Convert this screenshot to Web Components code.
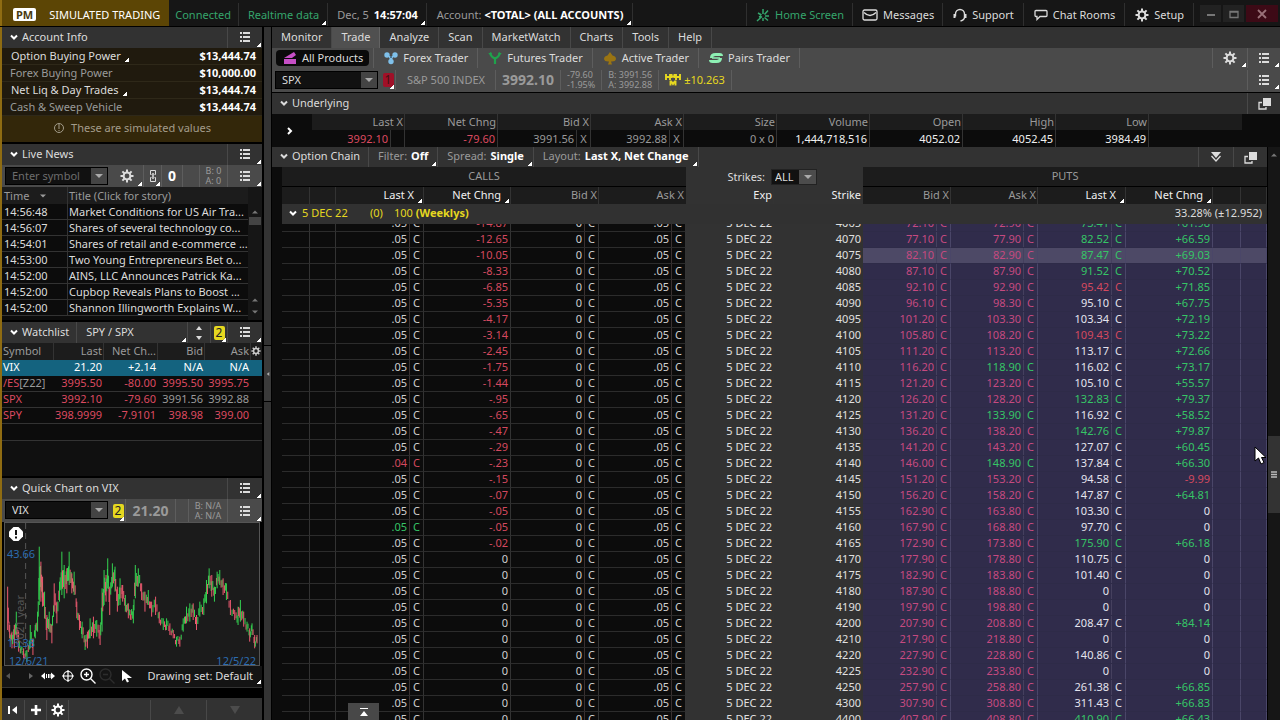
<!DOCTYPE html>
<html lang="en">
<head>
<meta charset="utf-8">
<title>Simulated Trading</title>
<style>
  :root {
    --bar: #323232; --tool: #4a4a4a; --head: #1c1c1c; --cell: #0c0c0c; --line: #333;
    --dim: #9a9a9a; --text: #dcdcdc; --red: #dc4a60; --green: #36c566; --yellow: #e6d820;
  }
  body { margin: 0; background: #000; color: var(--text); font: 11px/16px "Noto Sans", "Open Sans", sans-serif; }
</style>
</head>
<body>
<trade-desk></trade-desk>
<script>
const gear = (() => {
  let s = '';
  for (let i = 0; i < 8; i++) s += `<path d="M7 .5v3" transform="rotate(${i * 45} 7 7)"/>`;
  return `<g fill="none" stroke="currentColor" stroke-width="2">${s}<circle cx="7" cy="7" r="3.4"/></g>`;
})();
const ICONS = {
  gear: [14, 14, gear],
  list: [12, 12, '<path fill="currentColor" d="M1 1h2v2H1zM4 1h7v2H4zM1 5h2v2H1zM4 5h7v2H4zM1 9h2v2H1zM4 9h7v2H4z"/>'],
  chevron: [8, 8, '<path d="M1 2.500l3 3 3-3" fill="none" stroke="currentColor" stroke-width="2"/>'],
  right: [8, 8, '<path d="M2 1l3 3-3 3" fill="none" stroke="currentColor" stroke-width="2"/>'],
  down: [8, 8, '<path d="M0 2h8L4 6z" fill="currentColor"/>'],
  up: [8, 8, '<path d="M0 6h8L4 2z" fill="currentColor"/>'],
  spin: [8, 14, '<path d="M1 4h6L4 0zM1 10h6L4 14z" fill="currentColor"/>'],
  link: [8, 14, '<g fill="none" stroke="currentColor"><path d="M2.500 5.500h-1v-4h5v4h-1M2.500 8.500h-1v4h5v-4h-1"/><path d="M4 4v6" stroke-width="1.500"/></g>'],
  info: [12, 12, '<circle cx="6" cy="6" r="4.500" fill="none" stroke="currentColor"/><path d="M5.500 2h1v5h-1zM5.500 8h1v1h-1z" fill="currentColor"/>'],
  home: [14, 14, '<g fill="none" stroke="currentColor" stroke-width="1.500"><path d="M1 13l5-4.500M7 1v5M12 2.500L8.500 6.500M13 8H9M12 12.500L8.500 9.500M7 10v3M2 5l3.500 2M3 9l2-1"/></g>'],
  mail: [16, 12, '<g fill="none" stroke="currentColor" stroke-width="1.300"><rect x="1" y="1" width="14" height="10" rx="1.500"/><path d="M2 3.500q6 6 12 0"/></g>'],
  support: [14, 14, '<g fill="none" stroke="currentColor" stroke-width="1.400"><path d="M2.500 8.500V6a4.500 4.500 0 0 1 9 0v3q0 3-4 4"/><path d="M1.500 6v4M12.500 6v4" stroke-width="2"/></g>'],
  chat: [14, 12, '<path d="M2 1.500h10a1 1 0 0 1 1 1v4a1 1 0 0 1-1 1H6l-3 3v-3H2a1 1 0 0 1-1-1v-4a1 1 0 0 1 1-1z" fill="none" stroke="currentColor" stroke-width="1.300"/>'],
  min: [10, 10, '<path d="M1 5h8v2H1z" fill="currentColor"/>'],
  max: [10, 10, '<path d="M1 2.500h8v6H1zM1 3h8" fill="none" stroke="currentColor" stroke-width="1.300"/>'],
  close: [10, 10, '<path d="M1 1l8 8M9 1L1 9" stroke="currentColor" stroke-width="1.800"/>'],
  all: [14, 14, '<path d="M1 8h12v5H1z" fill="#c64fc6"/><path d="M1 7l10-6 2 3-4 3z" fill="#c64fc6"/>'],
  forex: [14, 14, '<g fill="#7fc0ea"><circle cx="3" cy="4" r="2.700"/><circle cx="11" cy="4" r="2.700"/><circle cx="7" cy="10.500" r="2.700"/><path d="M4 5l6 0-3 5z"/></g><circle cx="7" cy="6" r="1" fill="#3a5a70"/>'],
  futures: [14, 14, '<path d="M2 2q1 4 5 5.500Q11 6 12 2M7 7v6" fill="none" stroke="#1fa34c" stroke-width="2.200"/><path d="M0 3l3-2 1 2zM14 3l-3-2-1 2z" fill="#1fa34c"/>'],
  active: [14, 14, '<path d="M7 1l2.500 3.500Q13 5 13 8q-.500 2.500-4 2.500H8l1 3H5l1-3H5Q1.500 10.500 1 8q0-3 3.500-3.500z" fill="#9a7412"/>'],
  pairs: [14, 14, '<g fill="none" stroke="#8df0b4" stroke-width="3"><path d="M2.500 7q0-3.500 4-3.500h4q2 0 2 1.500M11.500 7q0 3.500-4 3.500h-4q-2 0-2-1.500"/><path d="M3 7h3l2 0h3" stroke-width="1.500"/></g>'],
  mm: [16, 14, '<path d="M1 1v6M5 1v6M1 4h4M6.500 1v4M9.500 1v4M6 3.500h4M11 1v6M15 1v6M11 4h4M5.500 7.500v5M10.500 7.500v5M6 8l2 3 2-3" fill="none" stroke="#e6d820" stroke-width="1.900"/>'],
  popout: [13, 13, '<path d="M5 1h8v8H5z" fill="currentColor"/><path d="M4 5.500H1v6.500h7v-2" fill="none" stroke="currentColor" stroke-width="1.300"/>'],
  dbl: [12, 12, '<path d="M1 1h10L6 7z" fill="currentColor"/><path d="M1.500 5L6 10l4.500-5" fill="none" stroke="currentColor" stroke-width="1.300"/>'],
  top: [10, 10, '<path d="M1 1h8v1H1zM1 9h8L5 4z" fill="currentColor"/>'],
  first: [10, 10, '<path d="M0 1h2v8H0zM9 1v8L4 5z" fill="currentColor"/>'],
  plus: [12, 12, '<path d="M6 1v10M1 6h10" stroke="currentColor" stroke-width="2.600"/>'],
  pan: [14, 10, '<path d="M0 5l4-3.500v7zM14 5l-4-3.500v7zM5 3h1v4H5zM7 3h1v4H7zM8.500 3h1v4h-1z" fill="currentColor"/>'],
  target: [14, 14, '<g fill="none" stroke="currentColor" stroke-width="1.200"><circle cx="7" cy="7" r="4.500"/><path d="M7 1v12M1 7h12"/></g>'],
  zin: [16, 16, '<g fill="none" stroke="currentColor" stroke-width="1.400"><circle cx="6.500" cy="6.500" r="5.500"/><path d="M10.500 10.500l5 5M4 6.500h5M6.500 4v5"/></g>'],
  zout: [16, 16, '<g fill="none" stroke="currentColor" stroke-width="1.400"><circle cx="6.500" cy="6.500" r="5.500"/><path d="M10.500 10.500l5 5M4 6.500h5"/></g>'],
  arrow: [12, 14, '<path d="M1 1v11l3-2.500 2 4 2-1-2-3.500h5z" fill="currentColor"/>'],
  left: [6, 8, '<path d="M5 1v6L1 4z" fill="currentColor"/>'],
  play: [6, 8, '<path d="M1 1v6l4-3z" fill="currentColor"/>'],
  bigup: [12, 12, '<path d="M1 10h10L6 2z" fill="currentColor"/>'],
  bigdown: [12, 12, '<path d="M1 2h10L6 10z" fill="currentColor"/>'],
  grip: [6, 8, '<path d="M0 1h6M0 3.500h6M0 6h6" stroke="currentColor" stroke-width="1.300"/>'],
  alert: [14, 14, '<path d="M4.500 0h5L14 4.500v5L9.500 14h-5L0 9.500v-5z" fill="#fff"/><path d="M6 3h2v5H6zM6 9.500h2v2H6z" fill="#111"/>'],
  mouse: [14, 20, '<path d="M1 1v14l3.500-3 2.500 6 3-1.500-2.500-5h4.500z" fill="#fff" stroke="#000"/>']
};
const ic = (name) => {
  const [w, h, body] = ICONS[name];
  return `<svg width="${w}" height="${h}" viewBox="0 0 ${w} ${h}" aria-hidden="true">${body}</svg>`;
};

const BASE = `
  :host { display: block; box-sizing: border-box; }
  *, *::before, *::after { box-sizing: border-box; }
  button, input, select { font: inherit; color: inherit; margin: 0; padding: 0; border: 0; background: none; border-radius: 0; outline: 0; text-align: left; }
  svg { display: block; flex: none; }
  .row { display: flex; align-items: stretch; }
  .grow { flex: 1; }
  .seg { display: flex; align-items: center; gap: 5px; padding: 0 9px 0 10px; border-right: 1px solid #ffffff1c; white-space: nowrap; position: relative; }
  .box { display: flex; align-items: center; justify-content: center; position: relative; border-right: 1px solid #ffffff1c; }
  .end { width: var(--end, 35px); border-right: 0; border-left: 1px solid #ffffff1c; }
  .c::after { content: ""; position: absolute; right: 1px; bottom: 1px; width: 4px; height: 4px; background: linear-gradient(135deg, transparent 50%, #fff 50%); }
  b { font-weight: 700; color: #fff; }
  .badge { width: 11px; height: 14px; border-radius: 2px; background: var(--yellow); color: #222; text-align: center; line-height: 14px; font-size: 12px; }
  .ba { font-size: 9px; line-height: 10px; color: var(--dim); }
  .big { font-size: 14px; font-weight: 700; color: var(--dim); }
  table { border-collapse: separate; border-spacing: 0; table-layout: fixed; width: 100%; }
  th { font-weight: 400; }
  th, td { padding: 0; overflow: hidden; white-space: nowrap; }
  .red { color: var(--red); } .green { color: var(--green); }
`;
function define(name, css, html, ready) {
  const tpl = document.createElement('template');
  tpl.innerHTML = `<style>${BASE}${css}</style>${html}`;
  customElements.define(name, class extends HTMLElement {
    connectedCallback() {
      if (this.shadowRoot) return;
      this.attachShadow({ mode: 'open' }).append(tpl.content.cloneNode(true));
      if (ready) ready.call(this, this.shadowRoot);
    }
  });
}

define('symbol-box', `
  :host { width: 103px; height: 18px; background: #111; border: 1px solid #000; }
  .row { height: 16px; }
  input { flex: 1; min-width: 0; padding-left: 6px; }
  input::placeholder { color: #6d6d6d; opacity: 1; }
  button { width: 16px; background: #444; display: grid; place-items: center; color: #aaa; }
`, `<div class="row"><input aria-label="Symbol"><button aria-label="Recent symbols">${ic('down')}</button></div>`,
function (root) {
  const input = root.querySelector('input');
  input.value = this.getAttribute('value') || '';
  input.placeholder = this.getAttribute('placeholder') || '';
});

define('panel-header', `
  :host { height: 21px; background: var(--bar); }
  .row { height: 100%; }
  .title { display: flex; align-items: center; gap: 4px; padding: 0 0 1px 8px; white-space: nowrap; }
  .title svg { color: #fff; }
  .end { padding-bottom: 1px; }
  ::slotted(*) { flex: 1; }
`, `<div class="row"><button class="title">${ic('chevron')}<span></span></button><slot><span class="grow"></span></slot><button class="box end c" aria-label="Menu">${ic('list')}</button></div>`,
function (root) { root.querySelector('.title span').textContent = this.getAttribute('label'); });

define('top-bar', `
  :host { background: #161616; border-bottom: 1px solid #000; height: 27px; }
  .row { height: 100%; padding-top: 3px; padding-left: 2px; background: linear-gradient(90deg, #8f6c12 2px, #161616 2px); }
  .sim { background: #5c4505; margin-top: -3px; padding: 3px 9px 0 11px; gap: 13px; border: 0; color: #fff; }
  .pm { background: #fff; color: #4a3a10; font-weight: 700; line-height: 13px; border-radius: 2px; padding: 0 3px; }
  .link { color: #35a56c; }
  .status { padding-left: 6px; padding-right: 7px; }
  .tight { padding: 0 8px 0 9px; }
  .muted { color: var(--dim); }
  .wins { display: flex; align-items: center; gap: 2px; padding: 0 2px 2px 6px; }
  .wins button { width: 21px; height: 17px; display: grid; place-items: center; background: #222; color: #777; }
  .wins .x { width: 32px; background: #3d0a16; color: #9a7078; }
`, `<div class="row">
  <div class="seg sim"><span class="pm">PM</span><span>SIMULATED TRADING</span></div>
  <div class="seg status link">Connected</div>
  <button class="seg tight c link">Realtime data</button>
  <button class="seg tight c"><span class="muted">Dec, 5</span><b>14:57:04</b></button>
  <button class="seg c"><span><span class="muted">Account:</span> <b>&lt;TOTAL&gt; (ALL ACCOUNTS)</b></span></button>
  <span class="grow"></span>
  <button class="seg tight link" style="border-left:1px solid #ffffff1c">${ic('home')}Home Screen</button>
  <button class="seg tight">${ic('mail')}Messages</button>
  <button class="seg">${ic('support')}Support</button>
  <button class="seg">${ic('chat')}Chat Rooms</button>
  <button class="seg">${ic('gear')}Setup</button>
  <div class="wins"><button aria-label="Minimize">${ic('min')}</button><button aria-label="Maximize">${ic('max')}</button><button class="x" aria-label="Close">${ic('close')}</button></div>
</div>`);

define('account-info', `
  :host { border-bottom: 2px solid #000; }
  dl { margin: 0; background: #201a0e; }
  dl div { display: flex; justify-content: space-between; height: 17px; padding: 0 6px 0 9px; border-bottom: 1px solid #2e2819; }
  dt { position: relative; padding-right: 9px; } dd { margin: 0; }
  dl .m { padding-left: 8px; } .m dt { color: var(--dim); }
  dt.c::after { bottom: 2px; }
  .note { height: 26px; padding-bottom: 2px; background: #33270a; color: #a39c8a; display: flex; align-items: center; justify-content: center; gap: 6px; margin: 0; }
`, `<panel-header label="Account Info"></panel-header>
<dl><div><dt class="c">Option Buying Power</dt><dd><b>$13,444.74</b></dd></div>
<div class="m"><dt>Forex Buying Power</dt><dd><b>$10,000.00</b></dd></div>
<div><dt class="c">Net Liq &amp; Day Trades</dt><dd><b>$13,444.74</b></dd></div>
<div class="m"><dt>Cash &amp; Sweep Vehicle</dt><dd><b>$13,444.74</b></dd></div></dl>
<p class="note">${ic('info')}These are simulated values</p>`);

define('live-news', `
  :host { border-bottom: 2px solid #000; }
  .tools { height: 22px; background: var(--tool); }
  symbol-box { margin: 2px 3px 0 3px; }
  .list { background: var(--cell); height: 133px; display: flex; align-items: flex-start; overflow: hidden; }
  thead th { height: 17px; background: var(--head); color: var(--dim); text-align: left; padding-left: 2px; border-right: 1px solid var(--line); }
  td { height: 16px; line-height: 15px; padding-left: 2px; border-bottom: 1px solid var(--line); border-right: 1px solid var(--line); }
  th svg { display: inline-block; margin-left: 8px; width: 6px; }
  td:last-child, th:last-child { border-right: 0; padding-left: 1px; }
  .bar { width: 14px; height: 133px; flex: none; background: #161616; display: flex; flex-direction: column; align-items: center; color: #777; padding-top: 21px; }
  .bar i { width: 12px; height: 8px; margin-top: 1px; background: #444; } .bar svg { width: 6px; }
`, `<panel-header label="Live News"></panel-header>
<div class="row tools"><symbol-box placeholder="Enter symbol"></symbol-box>
<button class="box c" style="width:33px" aria-label="News settings">${ic('gear')}</button>
<button class="box c" style="width:18px" aria-label="Link">${ic('link')}</button>
<span class="box" style="width:21px"><b style="font-size:14px">0</b></span><span class="box" style="width:17px"></span>
<span class="box ba grow" style="border:0">B: 0<br>A: 0</span><button class="box end c" aria-label="Menu">${ic('list')}</button></div>
<div class="list"><table><colgroup><col style="width:66px"><col></colgroup><thead><tr><th>Time ${ic('down')}</th><th>Title (Click for story)</th></tr></thead><tbody></tbody></table>
<div class="bar">${ic('up')}<i></i><span class="grow"></span>${ic('up')}<span style="height:4px"></span>${ic('down')}<span style="height:4px"></span></div></div>`,
function (root) {
  root.querySelector('tbody').innerHTML = [
    ['14:56:48', 'Market Conditions for US Air Tra...'], ['14:56:07', 'Shares of several technology co...'],
    ['14:54:01', 'Shares of retail and e-commerce ...'], ['14:53:00', 'Two Young Entrepreneurs Bet o...'],
    ['14:52:00', 'AINS, LLC Announces Patrick Ka...'], ['14:52:00', 'Cupbop Reveals Plans to Boost ...'],
    ['14:52:00', 'Shannon Illingworth Explains W...']
  ].map(r => `<tr><td>${r[0]}</td><td>${r[1]}</td></tr>`).join('');
});

define('watch-list', `
  :host { border-bottom: 2px solid #000; background: #101010; min-height: 156px; }
  .extra { display: flex; border-left: 1px solid #ffffff1c; margin-left: 7px; }
  .name { flex: 1; padding-left: 9px; padding-bottom: 1px; }
  th { height: 17px; line-height: 15px; vertical-align: top; background: var(--head); color: var(--dim); text-align: right; padding-right: 1px; border-right: 1px solid var(--line); }
  td { height: 16px; line-height: 13px; vertical-align: top; text-align: right; padding-right: 2px; border-bottom: 1px solid var(--line); background: var(--cell); }
  th:first-child, td:first-child { text-align: left; padding: 0 0 0 1px; }
  th:last-child { border: 0; color: #ccc; } th svg { width: 10px; height: 10px; margin-top: 3px; }
  .on td { background: #14637f; color: #fff; border-color: #14637f; }
  .g { color: var(--dim); }
  .empty td { height: 17px; }
`, `<panel-header label="Watchlist"><div class="extra"><button class="seg c name">SPY / SPX</button><button class="box" style="width:23px" aria-label="Next list">${ic('spin')}</button><button class="box c" style="width:16px;border:0"><span class="badge">2</span></button></div></panel-header>
<table><colgroup><col style="width:52px"><col style="width:50px"><col style="width:54px"><col style="width:47px"><col style="width:46px"><col></colgroup>
<thead><tr><th>Symbol</th><th>Last</th><th>Net Ch...</th><th>Bid</th><th>Ask</th><th>${ic('gear')}</th></tr></thead>
<tbody><tr class="on"><td>VIX</td><td>21.20</td><td>+2.14</td><td>N/A</td><td>N/A</td><td></td></tr>
<tr class="red"><td>/ES<span class="g">[Z22]</span></td><td>3995.50</td><td>-80.00</td><td>3995.50</td><td>3995.75</td><td></td></tr>
<tr class="red"><td>SPX</td><td>3992.10</td><td>-79.60</td><td class="g">3991.56</td><td class="g">3992.88</td><td></td></tr>
<tr class="red"><td>SPY</td><td>398.9999</td><td>-7.9101</td><td>398.98</td><td>399.00</td><td></td></tr>
<tr class="empty"><td colspan="6"></td></tr></tbody></table>`);

const ENVELOPE = [22,215,345,28,330,370,35,350,400,42,330,400,48,290,360,55,350,410,62,395,415,70,400,430,80,405,440,90,330,400,98,370,420,105,330,370,112,290,350,117,95,270,122,140,260,127,185,275,133,230,310,140,300,375,147,290,350,155,330,385,162,205,290,170,260,325,178,200,260,185,110,240,192,150,250,200,160,235,207,110,210,215,175,235,222,170,240,230,260,310,238,300,345,246,320,370,255,360,405,262,350,400,270,310,370,280,305,370,290,315,365,300,330,390,306,220,350,312,165,270,318,180,260,323,130,220,329,215,300,337,145,215,345,155,230,352,215,290,360,190,270,368,210,260,376,240,290,385,265,310,393,285,315,400,270,325,406,150,250,415,160,215,425,205,255,435,230,290,445,225,270,455,260,305,467,245,300,478,290,325,490,310,345,500,310,345,510,325,360,520,345,370,530,365,395,540,365,395,550,310,350,560,275,325,570,265,320,580,265,315,590,300,345,600,260,305,612,250,300,620,195,265,628,160,220,636,180,245,644,215,260,652,170,220,660,165,210,670,190,240,680,205,255,692,255,300,705,285,315,715,275,330,722,255,320,732,290,335,742,320,350,750,340,380,757,325,360,765,360,400,772,360,385];
function priceBars() {
  const pts = [];
  for (let i = 0; i < ENVELOPE.length; i += 3) pts.push(ENVELOPE.slice(i, i + 3));
  const out = []; let prev = 300;
  const bar = (x, a, b, k) => {
    const mid = (a + b) / 2;
    const up = mid < prev ? k % 5 !== 0 : k % 4 === 0;
    prev = mid;
    out.push(`<path d="M${x} ${a}V${b}" stroke="${up ? '#34d350' : '#ee5a70'}"/>`);
  };
  pts.forEach((p, i) => {
    bar(p[0], p[1], p[2], i * 3);
    const n = pts[i + 1]; if (!n) return;
    for (const t of [.35, .7]) {
      const a = p[1] + (n[1] - p[1]) * t, b = p[2] + (n[2] - p[2]) * t, q = (b - a) * .27;
      const j = ((i * 7 + (t < .5 ? 3 : 8)) % 11 - 5) * 2;
      bar(Math.round(p[0] + (n[0] - p[0]) * t), Math.round(a + q + j), Math.round(b - q + j), i * 3 + (t < .5 ? 1 : 2));
    }
  });
  return out.join('');
}
define('quick-chart', `
  .tools { height: 23px; background: var(--tool); }
  symbol-box { margin: 2px 3px 0 3px; }
  .plot { position: relative; height: 144px; margin: 0 2px; background: #1b1b1b; border: 1px solid #555; color: #2c6cb0; }
  .plot > svg { width: 100%; height: 100%; }
  .plot span { position: absolute; line-height: 14px; }
  .draw { height: 22px; padding-bottom: 2px; background: #141414; border-bottom: 1px solid #333; align-items: center; color: #fff; }
  .draw button { display: grid; place-items: center; height: 19px; }
  .draw .set { position: relative; padding-right: 9px; color: var(--text); align-items: center; }
`, `<panel-header label="Quick Chart on VIX"></panel-header>
<div class="row tools"><symbol-box value="VIX"></symbol-box>
<button class="box c" style="width:15px"><span class="badge">2</span></button>
<span class="box big" style="width:50px">21.20</span><span class="box" style="width:13px"></span>
<span class="box ba grow" style="border:0">B: N/A<br>A: N/A</span><button class="box end c" aria-label="Menu">${ic('list')}</button></div>
<div class="plot"><svg viewBox="14 24 764 426" preserveAspectRatio="none"><path d="M76 24V450" stroke="#555" stroke-width="3" stroke-dasharray="18 12"/><g fill="none" stroke-width="3">${priceBars()}</g></svg>
<span style="left:4px;top:4px">${ic('alert')}</span>
<span style="left:2px;top:24px">43.66</span><span style="left:2px;top:113px">15.38</span>
<span style="left:4px;top:131px">12/6/21</span><span style="right:3px;top:131px">12/5/22</span>
<span style="left:8px;top:72px;color:#555;writing-mode:vertical-rl;transform:rotate(180deg)">2021 year</span></div>
<div class="row draw"><button style="width:12px;color:#555" aria-label="Back">${ic('left')}</button><button style="width:34px;color:#666" aria-label="Forward">${ic('play')}</button>
<button style="width:18px;margin-left:-9px" aria-label="Pan">${ic('pan')}</button><button style="width:21px" aria-label="Crosshair">${ic('target')}</button><button style="width:19px" aria-label="Zoom in">${ic('zin')}</button><button style="width:20px;color:#2c2c2c" aria-label="Zoom out">${ic('zout')}</button><button style="width:20px" aria-label="Pointer">${ic('arrow')}</button>
<span class="grow"></span><button class="set c">Drawing set: Default</button></div>`);

define('gadget-bar', `
  :host { background: var(--bar); height: 22px; margin-top: auto; }
  .row { height: 100%; color: #fff; padding-top: 2px; }
`, `<div class="row"><button class="box" style="width:23px" aria-label="First">${ic('first')}</button><button class="box" style="width:22px" aria-label="Add gadget">${ic('plus')}</button><button class="box" style="width:22px" aria-label="Settings">${ic('gear')}</button><span class="box grow"></span><button class="box" style="width:56px;color:#4c4c4c" aria-label="Up">${ic('bigup')}</button><button class="box" style="width:55px;color:#4c4c4c;border:0" aria-label="Down">${ic('bigdown')}</button></div>`);

define('main-menu', `
  nav { display: flex; height: 21px; background: var(--bar); }
  a { color: inherit; text-decoration: none; }
  .seg { padding: 0 9px 1px; }
  .on { background: #505050; }
`, `<nav><a class="seg" href="#monitor">Monitor</a><a class="seg on" href="#trade">Trade</a><a class="seg" href="#analyze">Analyze</a><a class="seg" href="#scan">Scan</a><a class="seg" href="#marketwatch">MarketWatch</a><a class="seg" href="#charts">Charts</a><a class="seg" href="#tools">Tools</a><a class="seg" href="#help">Help</a></nav>`);

define('product-tabs', `
  .row { height: 22px; background: var(--tool); padding-bottom: 2px; }
  a { color: inherit; text-decoration: none; }
  .first { padding: 0 4px 0 4px; }
  .pill { display: flex; gap: 5px; align-items: center; height: 16px; padding: 0 6px 0 7px; background: #0a0a0a; border-radius: 4px; }
`, `<nav class="row"><a class="seg first" href="#all"><span class="pill">${ic('all')}All Products</span></a><a class="seg" href="#forex">${ic('forex')}Forex Trader</a><a class="seg" href="#futures">${ic('futures')}Futures Trader</a><a class="seg" href="#active">${ic('active')}Active Trader</a><a class="seg" href="#pairs">${ic('pairs')}Pairs Trader</a><span class="grow"></span><button class="box c" style="width:35px;border:0;border-left:1px solid #ffffff1c" aria-label="Settings">${ic('gear')}</button><button class="box end c" aria-label="Menu">${ic('list')}</button></nav>`);

define('symbol-bar', `
  .row { height: 23px; background: var(--tool); border-bottom: 1px solid #000; padding-bottom: 2px; }
  symbol-box { margin: 1px 3px 0 3px; }
  .badge { background: #a01028; color: #401010; }
  .desc { color: var(--dim); padding: 0 10px 0 11px; } .em { color: var(--yellow); gap: 3px; }
  .tight { padding: 0 6px; }
`, `<div class="row"><symbol-box value="SPX"></symbol-box><button class="box c" style="width:15px"><span class="badge">1</span></button>
<span class="seg desc">S&amp;P 500 INDEX</span><span class="seg big tight">3992.10</span><span class="seg ba tight">-79.60<br>-1.95%</span><span class="seg ba tight">B: 3991.56<br>A: 3992.88</span><span class="seg em tight">${ic('mm')}±10.263</span>
<span class="grow"></span><button class="box end c" aria-label="Menu">${ic('list')}</button></div>`);

define('underlying-quote', `
  .head { height: 21px; background: var(--bar); }
  .title { display: flex; align-items: center; gap: 4px; padding: 0 0 1px 8px; }
  .body { background: var(--cell); }
  .open { width: 40px; padding-right: 4px; display: grid; place-items: center; color: #fff; }
  .pad { width: 38px; }
  th { height: 16px; line-height: 16px; background: var(--head); color: var(--dim); text-align: right; padding-right: 1px; border-right: 1px solid var(--line); }
  td { height: 17px; line-height: 17px; text-align: right; padding-right: 2px; border-right: 1px solid var(--line); color: #f0f0f0; }
  th:last-child, td:last-child { border: 0; }
  td i { display: inline-block; width: 14px; margin: 0 -2px 0 2px; border-left: 1px solid var(--line); font-style: normal; text-align: center; height: 17px; vertical-align: top; }
  .red { color: var(--red); } .g { color: var(--dim); }
`, `<div class="row head"><button class="title">${ic('chevron')}Underlying</button><span class="grow"></span><button class="box end" aria-label="Detach">${ic('popout')}</button></div>
<div class="row body"><button class="open" aria-label="Expand">${ic('right')}</button>
<table class="grow"><thead><tr><th>Last X</th><th>Net Chng</th><th>Bid X</th><th>Ask X</th><th>Size</th><th>Volume</th><th>Open</th><th>High</th><th>Low</th><th></th></tr></thead>
<tbody><tr><td class="red">3992.10<i></i></td><td class="red">-79.60</td><td class="g">3991.56<i>X</i></td><td class="g">3992.88<i>X</i></td><td class="g">0 x 0</td><td>1,444,718,516</td><td>4052.02</td><td>4052.45</td><td>3984.49</td><td></td></tr></tbody></table><span class="pad"></span></div>`);

const CHAIN = `4065|-14.87|72.10|72.90|73.41g|+61.98
4070|-12.65|77.10|77.90|82.52g|+66.59
4075|-10.05|82.10|82.90|87.47g|+69.03
4080|-8.33|87.10|87.90|91.52g|+70.52
4085|-6.85|92.10|92.90|95.42r|+71.85
4090|-5.35|96.10|98.30|95.10|+67.75
4095|-4.17|101.20|103.30|103.34|+72.19
4100|-3.14|105.80|108.20|109.43r|+73.22
4105|-2.45|111.20|113.20|113.17|+72.66
4110|-1.75|116.20|118.90g|116.02|+73.17
4115|-1.44|121.20|123.20|105.10|+55.57
4120|-.95|126.20|128.20|132.83g|+79.37
4125|-.65|131.20|133.90g|116.92|+58.52
4130|-.47|136.20|138.20|142.76g|+79.87
4135|-.29|141.20|143.20|127.07|+60.45
4140|-.23|146.00|148.90g|137.84|+66.30
4145|-.15|151.20|153.20|94.58|-9.99
4150|-.07|156.20|158.20|147.87|+64.81
4155|-.05|162.90|163.80|103.30|0
4160|-.05|167.90|168.80|97.70|0
4165|-.02|172.90|173.80|175.90g|+66.18
4170|0|177.90|178.80|110.75|0
4175|0|182.90|183.80|101.40|0
4180|0|187.90|188.80|0|0
4190|0|197.90|198.80|0|0
4200|0|207.90|208.80|208.47|+84.14
4210|0|217.90|218.80|0|0
4220|0|227.90|228.80|140.86|0
4225|0|232.90|233.80|0|0
4250|0|257.90|258.80|261.38|+66.85
4300|0|307.90|308.80|311.43|+66.83
4400|0|407.90|408.80|410.90g|+66.43`.split('\n').map(l => l.split('|'));
const COLS = `<colgroup>${[28, 26, 88, 87, 88, 87, 88, 89, 88, 87, 88, 87, 28, 26].map(w => `<col style="width:${w}px">`).join('')}</colgroup>`;

define('option-chain', `
  :host { display: flex; flex: 1; min-height: 0; position: relative; background: var(--cell); }
  .main { flex: 1; min-width: 0; display: flex; flex-direction: column; border-right: 1px solid #000; }
  .head { height: 20px; background: var(--bar); flex: none; }
  .title { display: flex; align-items: center; gap: 4px; padding: 0 8px 2px; border-right: 1px solid #ffffff1c; }
  .mute { color: var(--dim); } .head .seg { gap: 4px; padding: 0 9px 2px; }
  .labels { margin-left: 10px; flex: none; }
  .view { flex: 1; min-height: 0; overflow: hidden; margin-left: 10px; }
  thead th { background: var(--head); color: var(--dim); vertical-align: top; }
  .side th { height: 20px; line-height: 17px; border-bottom: 1px solid #000; }
  .side .mid { background: var(--bar); border-color: var(--bar); color: var(--text); }
  .cols th { height: 17px; line-height: 15px; text-align: right; padding-right: 1px; border-right: 1px solid var(--line); position: relative; }
  .cols .hot { color: #f0f0f0; padding-right: 9px; }
  .cols .mid { background: var(--bar); color: #f0f0f0; }
  .cols .nb { border-right-color: transparent; }
  .exp th { height: 20px; padding-top: 1px; background: #313131; }
  .exp div { display: flex; align-items: center; padding: 0 5px 0 7px; color: var(--yellow); }
  .exp svg { color: #fff; margin-right: 5px; } .exp b { color: var(--yellow); }
  .strikes { display: flex; align-items: center; justify-content: flex-end; gap: 6px; padding: 1px 46px 0 0; }
  .pick { display: grid; border: 1px solid #222; background: #111; width: 46px; height: 16px; }
  .pick select { grid-area: 1 / 1; appearance: none; padding-left: 3px; line-height: 14px; }
  .pick span { grid-area: 1 / 1; justify-self: end; width: 17px; background: #4c4c4c; color: #aaa; display: grid; place-items: center; pointer-events: none; }
  td { height: 16px; line-height: 13px; vertical-align: top; text-align: right; padding-right: 2px; border-right: 1px solid var(--line); border-bottom: 1px solid #2c2c2c; color: #d0d0d0; }
  td i { display: inline-block; width: 14px; margin: 0 -2px 0 2px; border-left: 1px solid #3a3030; font-style: normal; text-align: center; height: 15px; vertical-align: top; }
  td.mid { background: var(--bar); border-bottom-color: var(--bar); color: #e0e0e0; padding-right: 1px; }
  td.st { border-right-color: var(--bar); }
  td.put { background: #302c4b; border-bottom-color: #2e2b48; border-right-color: #4a4668; color: #e4e4ee; }
  .hover td.put { background: #4d4966; }
  td.put i { border-left-color: #45405e; }
  td.put.pr { color: #c64a80; } td.put.red, td.red { color: #d4495f; } td.put.green, td.green { color: #36c566; }
  .scroll { width: 12px; background: #161616; display: flex; flex-direction: column; align-items: center; color: #777; padding-top: 4px; }
  .scroll svg { width: 6px; }
  .thumb { margin-top: 277px; width: 12px; height: 77px; background: #333; display: grid; place-items: center; color: #bbb; }
  .totop { position: absolute; left: 76px; bottom: 0; width: 31px; height: 17px; background: #484848; color: #fff; display: grid; place-items: center; }
`, `<div class="main"><div class="row head"><button class="title">${ic('chevron')}Option Chain</button><button class="seg c"><span class="mute">Filter:</span><b>Off</b></button><button class="seg c"><span class="mute">Spread:</span><b>Single</b></button><button class="seg c"><span class="mute">Layout:</span><b>Last X, Net Change</b></button><span class="grow"></span><button class="box" style="width:36px;border-left:1px solid #ffffff1c" aria-label="Collapse all">${ic('dbl')}</button><button class="box" style="width:33px;border:0" aria-label="Detach">${ic('popout')}</button></div>
<div class="labels"><table>${COLS}
<thead><tr class="side"><th colspan="6">CALLS</th><th colspan="2" class="mid"><div class="strikes"><label for="strikes">Strikes:</label><span class="pick"><select id="strikes"><option>ALL</option></select><span>${ic('down')}</span></span></div></th><th colspan="6">PUTS</th></tr>
<tr class="cols"><th></th><th></th><th class="hot c">Last X</th><th class="hot c">Net Chng</th><th>Bid X</th><th class="nb">Ask X</th><th class="mid">Exp</th><th class="mid nb">Strike</th><th>Bid X</th><th>Ask X</th><th class="hot c">Last X</th><th class="hot c">Net Chng</th><th></th><th></th></tr>
<tr class="exp"><th colspan="14"><div>${ic('chevron')}<span style="width:68px;text-align:left">5 DEC 22</span><span style="width:24px;text-align:left">(0)</span><span>100 <b>(Weeklys)</b></span><span class="grow"></span><span style="color:#dcdcdc">33.28% (±12.952)</span></div></th></tr></thead></table></div>
<div class="view"><table>${COLS}<tbody></tbody></table></div></div>
<div class="scroll">${ic('up')}<div class="thumb">${ic('grip')}</div></div>
<button class="totop" aria-label="Scroll to top">${ic('top')}</button>`,
function (root) {
  const tone = v => v.endsWith('g') ? 'green' : v.endsWith('r') ? 'red' : '';
  const net = v => v[0] === '-' ? 'red' : v[0] === '+' ? 'green' : '';
  const num = v => v.replace(/[gr]$/, '');
  root.querySelector('tbody').innerHTML = CHAIN.map(([k, n, b, a, l, p]) => {
    const last = k === '4140' ? ['.04', 'red'] : k === '4160' ? ['.05', 'green'] : ['.05', ''];
    return `<tr${k === '4075' ? ' class="hover"' : ''}><td></td><td></td><td class="${last[1]}">${last[0]}<i>C</i></td><td class="${net(n)}">${n}</td><td>0<i>C</i></td><td>.05<i>C</i></td>` +
      `<td class="mid">5 DEC 22</td><td class="mid st">${k}</td><td class="put pr">${b}<i>C</i></td><td class="put ${tone(a) || 'pr'}">${num(a)}<i>C</i></td>` +
      `<td class="put ${tone(l)}">${num(l)}<i>${l === '0' ? '' : 'C'}</i></td><td class="put ${net(p)}">${p}</td><td class="put"></td><td class="put"></td></tr>`;
  }).join('');
  const view = root.querySelector('.view');
  view.scrollTop = 8;
  requestAnimationFrame(() => { view.scrollTop = 8; });
});

define('trade-desk', `
  :host { display: flex; flex-direction: column; height: 100vh; overflow: hidden; position: relative; background: #000; }
  .work { flex: 1; min-height: 0; display: flex; }
  aside { width: 263px; flex: none; border-left: 2px solid #8f6c12; display: flex; flex-direction: column; padding-right: 1px; }
  .split { width: 9px; flex: none; background: #333; border: solid #000; border-width: 0 1px; display: flex; flex-direction: column; align-items: center; }
  .grab { margin-top: 318px; height: 57px; width: 7px; border: solid #000; border-width: 1px 0; display: grid; place-items: center; color: #aaa; background: #3a3a3a; }
  .grab svg { width: 4px; }
  main { --end: 33px; flex: 1; min-width: 0; display: flex; flex-direction: column; }
  .mouse { position: absolute; left: 1254px; top: 446px; pointer-events: none; z-index: 5; }
`, `<top-bar></top-bar><div class="work"><aside><account-info></account-info><live-news></live-news><watch-list></watch-list><quick-chart></quick-chart><gadget-bar></gadget-bar></aside>
<div class="split"><div class="grab">${ic('left')}</div></div>
<main><main-menu></main-menu><product-tabs></product-tabs><symbol-bar></symbol-bar><underlying-quote></underlying-quote><option-chain></option-chain></main></div><div class="mouse">${ic('mouse')}</div>`);
</script>
</body>
</html>
